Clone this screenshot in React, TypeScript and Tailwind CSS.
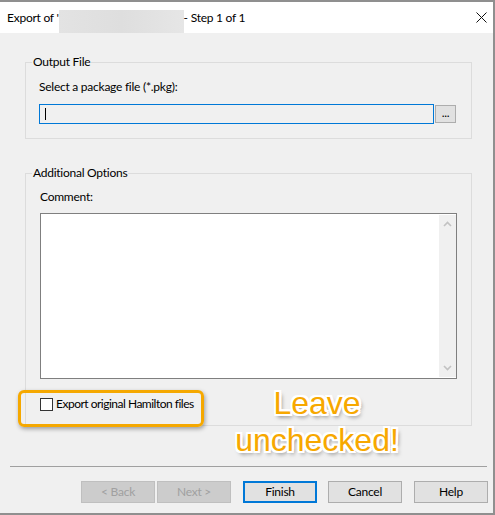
import React from "react";

const font = "font-['Lato','Noto_Sans',sans-serif] tracking-[-0.25px]";

function WinButton({ label, disabled, primary }: { label: string; disabled?: boolean; primary?: boolean }) {
  const cls = disabled
    ? "bg-[#cccccc] border border-[#bfbfbf] text-[#a0a0a0]"
    : primary
      ? "bg-[#e1e1e1] border-2 border-[#0078d7] text-black"
      : "bg-[#e1e1e1] border border-[#adadad] text-black";
  return (
    <div className={`w-[74px] h-[22px] flex items-center justify-center text-[12px] leading-none ${cls}`}>
      {label}
    </div>
  );
}

function Chevron({ up }: { up?: boolean }) {
  return (
    <svg width="9" height="6" viewBox="0 0 9 6" className="block">
      <polyline
        points={up ? "1,5 4.5,1.5 8,5" : "1,1 4.5,4.5 8,1"}
        fill="none"
        stroke="#c2c2c2"
        strokeWidth="1.6"
      />
    </svg>
  );
}

export default function App() {
  return (
    <div
      className={`relative w-[495px] h-[515px] flex flex-col bg-[#f0f0f0] border-t-2 border-r-2 border-b-2 border-[#8f8f8f] text-black ${font}`}
    >
      {/* title bar */}
      <div className="h-[31px] bg-white flex items-center text-[12px] leading-none shrink-0">
        <span className="ml-[7px]">Export of '</span>
        <span className="self-end w-[125px] h-[23px] bg-gradient-to-r from-[#e3e3e3] via-[#dedede] to-[#e6e6e6]" />
        <span>- Step 1 of 1</span>
        <svg width="11" height="11" viewBox="0 0 11 11" className="ml-auto mr-[6px]">
          <line x1="0.5" y1="0.5" x2="10.5" y2="10.5" stroke="#111" strokeWidth="1" />
          <line x1="10.5" y1="0.5" x2="0.5" y2="10.5" stroke="#111" strokeWidth="1" />
        </svg>
      </div>

      <div className="flex-1 flex flex-col pt-[22px]">
        {/* Output File */}
        <fieldset className="ml-[25px] w-[447px] border border-[#dcdcdc]">
          <legend className="ml-[6px] px-[1px] text-[12px] leading-[14px]">Output File</legend>
          <div className="pl-[13px] pt-[11px] pb-[14px]">
            <div className="text-[12px] leading-[14px]">Select a package file (*.pkg):</div>
            <div className="mt-[10px] flex items-center">
              <div className="w-[395px] h-[20px] border border-[#0078d7] bg-[#f0f0f0] flex items-center pl-[5px]">
                <div className="w-px h-[12px] bg-black" />
              </div>
              <div className="ml-[1px] w-[21px] h-[18px] bg-[#e1e1e1] border border-[#adadad] flex items-center justify-center text-[12px] leading-none pb-[3px]">
                ...
              </div>
            </div>
          </div>
        </fieldset>

        {/* Additional Options */}
        <fieldset className="mt-[27px] ml-[25px] w-[447px] border border-[#dcdcdc]">
          <legend className="ml-[6px] px-[1px] text-[12px] leading-[14px]">Additional Options</legend>
          <div className="pl-[14px] pt-[10px] pb-[14px]">
            <div className="text-[12px] leading-[14px]">Comment:</div>
            <div className="mt-[9px] w-[417px] h-[166px] border border-[#7f7f7f] bg-white flex">
              <div className="flex-1" />
              <div className="w-[17px] my-[1px] bg-[#f0f0f0] flex flex-col items-center justify-between py-[6px]">
                <Chevron up />
                <Chevron />
              </div>
            </div>
            <div className="mt-[18px] flex items-center h-[14px]">
              <div className="w-[13px] h-[13px] border border-[#333333] bg-white" />
              <span className="ml-[3px] text-[12px] leading-[14px] tracking-[-0.5px]">Export original Hamilton files</span>
            </div>
          </div>
        </fieldset>

        <div className="mt-[40px] ml-[10px] w-[477px] h-px bg-[#a0a0a0]" />

        <div className="mt-[14px] flex pl-[81px]">
          <WinButton label="< Back" disabled />
          <div className="ml-[2px]">
            <WinButton label="Next >" disabled />
          </div>
          <div className="ml-[12px]">
            <WinButton label="Finish" primary />
          </div>
          <div className="ml-[11px]">
            <WinButton label="Cancel" />
          </div>
          <div className="ml-[12px]">
            <WinButton label="Help" />
          </div>
        </div>
      </div>

      {/* annotation overlays */}
      <div className="absolute left-[18px] top-[388px] w-[186px] h-[37px] rounded-[6px] border-[3px] border-[#f5a800] shadow-[1px_2px_4px_rgba(0,0,0,0.35)]" />
      <div
        className="absolute left-[217px] top-[383px] w-[200px] text-center font-['Liberation_Sans',Arial,sans-serif] tracking-normal text-[32px] leading-[37px] text-[#f7a800] [text-shadow:0_0_1px_#fff,1px_1px_0_#fff,-1px_-1px_0_#fff,1px_-1px_0_#fff,-1px_1px_0_#fff,2px_0_0_#fff,-2px_0_0_#fff,0_2px_0_#fff,0_-2px_0_#fff,2px_2px_0_#fff,-2px_-2px_0_#fff,2px_-2px_0_#fff,-2px_2px_0_#fff,2px_3px_4px_rgba(0,0,0,0.55)]"
      >
        Leave
        <br />
        unchecked!
      </div>
    </div>
  );
}
